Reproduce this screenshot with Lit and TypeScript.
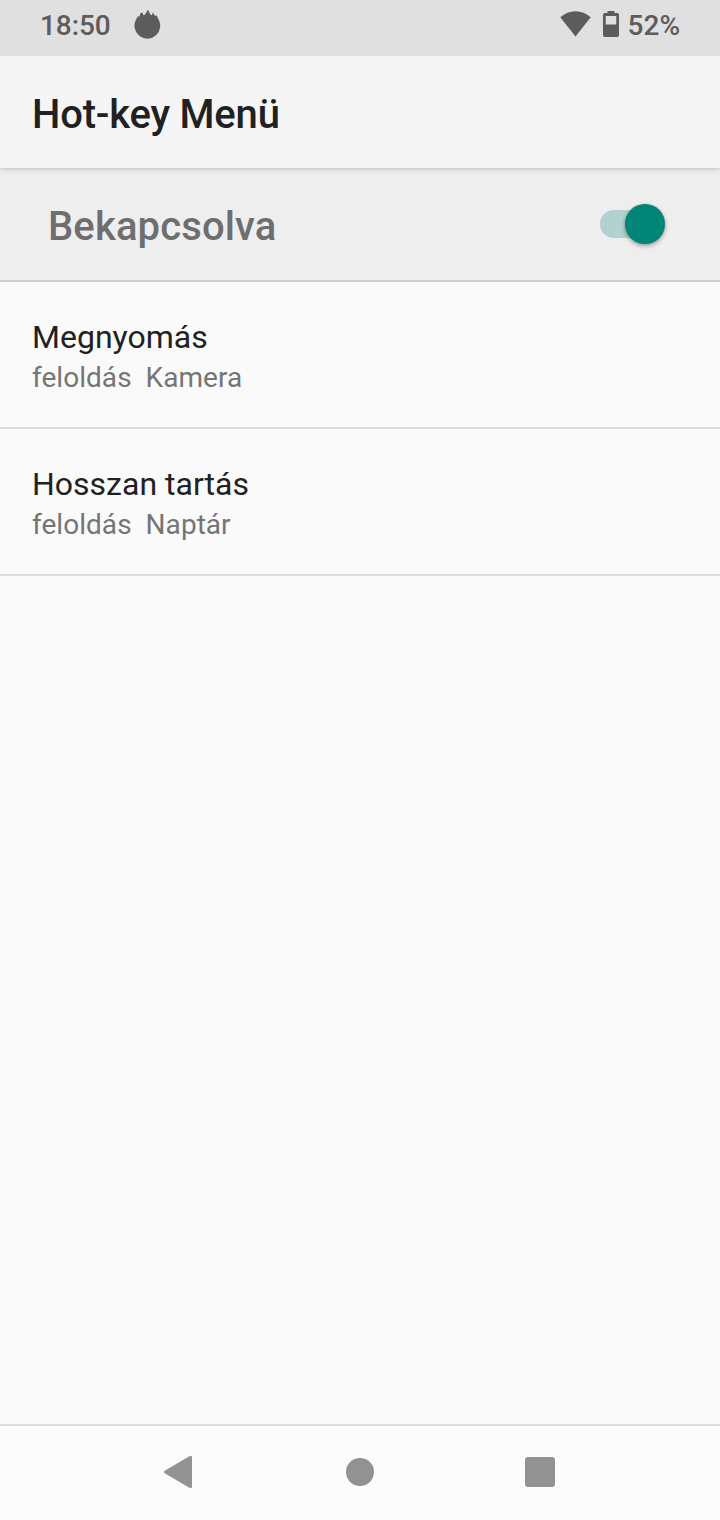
import { LitElement, html, css } from "lit";
import { customElement, property, state } from "lit/decorators.js";

@customElement("status-bar")
class StatusBar extends LitElement {
  static styles = css`
    :host { display: flex; align-items: flex-start; height: 56px; box-sizing: border-box; padding: 0 40px; background: #e0e0e0; color: #5c5c5c; }
    .text { font-size: 28px; font-weight: 500; line-height: 33px; padding-top: 9px; white-space: nowrap; }
    .clock { width: 94px; letter-spacing: -0.1px; }
    .spacer { flex: 1; }
    svg { display: block; fill: #5c5c5c; flex: none; }
    .flame { margin-top: 9px; }
    .wifi { margin: 11px 12px 0 0; }
    .battery { margin: 11px 9px 0 0; }
  `;
  render() {
    return html`
      <span class="text clock">18:50</span>
      <svg class="flame" width="27" height="31" viewBox="0 0 27 31"><path d="M2.200 10.200 4 7 5.200 8 6.600 4 8.600 3.600 9.200 6.200 11 5.600 14 .8 16.900 6.200 18.200 5.800 18.700 3.300 21 6.800 22.800 6.600 24 9.500A12.900 12.900 0 1 1 2.200 10.200Z"/></svg>
      <span class="spacer"></span>
      <svg class="wifi" width="31" height="26" viewBox="0 0 31 26"><path d="M.3 6.2C9-1.8 22-1.8 30.700 6.2L15.500 25.500Z"/></svg>
      <svg class="battery" width="16" height="26" viewBox="0 0 16 26"><path fill-rule="evenodd" d="M4.500 0H11.500V2H14.200Q16 2 16 3.800V24.200Q16 26 14.200 26H1.800Q0 26 0 24.200V3.800Q0 2 1.800 2H4.500ZM2.700 5V13.500H13.300V5Z"/></svg>
      <span class="text">52%</span>`;
  }
}

@customElement("toggle-switch")
class ToggleSwitch extends LitElement {
  @property({ type: Boolean }) checked = false;
  static styles = css`
    :host { display: block; }
    .track { position: relative; display: flex; width: 65px; height: 40px; margin-top: 1px; }
    .track::before { content: ""; position: absolute; left: 0; top: 6px; width: 60px; height: 28px; border-radius: 14px; background: #b0d3cf; }
    .thumb { position: relative; width: 40px; height: 40px; border-radius: 50%; background: #008577; box-shadow: 0 2px 4px rgba(0,0,0,.34), 0 0 2px rgba(0,0,0,.15); }
    .on { justify-content: flex-end; }
  `;
  render() {
    return html`<div class="track ${this.checked ? "on" : ""}"><div class="thumb"></div></div>`;
  }
}

@customElement("setting-row")
class SettingRow extends LitElement {
  @property() heading = "";
  @property() summary = "";
  static styles = css`
    :host { display: block; box-sizing: border-box; height: 147px; padding: 36px 32px 0; border-bottom: 2px solid #dbdbde; }
    .heading { font-size: 32px; line-height: 38px; color: #212121; }
    .summary { font-size: 28px; line-height: 33px; margin-top: 5px; color: #757575; white-space: pre; letter-spacing: 0.04px; }
  `;
  render() {
    return html`<div class="heading">${this.heading}</div><div class="summary">${this.summary}</div>`;
  }
}

@customElement("nav-bar")
class NavBar extends LitElement {
  static styles = css`
    :host { display: flex; justify-content: center; box-sizing: border-box; height: 96px; border-top: 2px solid #dcdcdc; background: #fcfcfc; }
    .key { width: 180px; height: 92px; display: block; fill: #929292; }
  `;
  render() {
    return html`
      <svg class="key" viewBox="0 0 180 92"><path d="M74.700 44.700 99.400 30.200Q102 29 102 31.600V60.400Q102 63 99.400 61.800L74.700 47.300Q73.300 46 74.700 44.700Z"/></svg>
      <svg class="key" viewBox="0 0 180 92"><circle cx="90" cy="46" r="14"/></svg>
      <svg class="key" viewBox="0 0 180 92"><rect x="75" y="31" width="30" height="30" rx="3"/></svg>`;
  }
}

@customElement("app-root")
class AppRoot extends LitElement {
  @state() private enabled = true;
  static styles = css`
    :host { display: flex; flex-direction: column; height: 1520px; background: #fafafa; font-family: Roboto, sans-serif; }
    .appbar { position: relative; flex: none; height: 112px; box-sizing: border-box; padding: 35px 32px 0; background: #f5f5f5; color: #212121; font-size: 40px; font-weight: 500; line-height: 47px; letter-spacing: -0.2px; box-shadow: 0 1px 4px rgba(0,0,0,.16), 0 2px 8px rgba(0,0,0,.06); clip-path: inset(0 0 -14px 0); }
    .master { flex: none; display: flex; justify-content: space-between; height: 114px; box-sizing: border-box; padding: 35px 55px 0 48px; background: #eee; border-bottom: 2px solid #cdcdd0; }
    .label { font-size: 40px; font-weight: 500; line-height: 47px; color: #6e6e6e; letter-spacing: 0.12px; }
    .list { flex: 1; }
  `;
  render() {
    const rows = [
      { heading: "Megnyomás", summary: "feloldás  Kamera" },
      { heading: "Hosszan tartás", summary: "feloldás  Naptár" },
    ];
    return html`
      <status-bar></status-bar>
      <div class="appbar">Hot-key Menü</div>
      <div class="master" @click=${() => (this.enabled = !this.enabled)}>
        <span class="label">Bekapcsolva</span>
        <toggle-switch ?checked=${this.enabled}></toggle-switch>
      </div>
      <div class="list">${rows.map((r) => html`<setting-row .heading=${r.heading} .summary=${r.summary}></setting-row>`)}</div>
      <nav-bar></nav-bar>`;
  }
}
